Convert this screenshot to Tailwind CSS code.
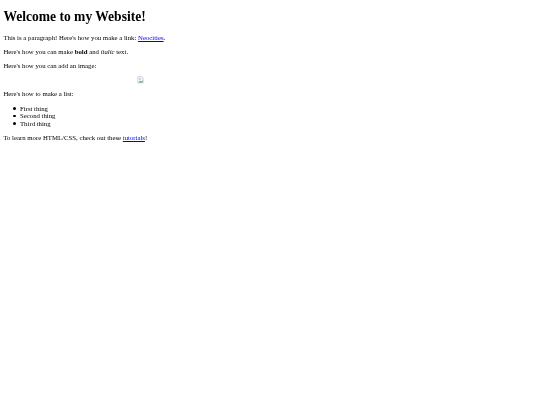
<!DOCTYPE html>
<html lang="en">
  <head>
    <meta charset="UTF-8" />
    <title>Welcome to my Website!</title>
    <script src="https://cdn.jsdelivr.net/npm/@tailwindcss/browser@4"></script>
  </head>
  <body class="bg-white text-black font-['Liberation_Serif',serif] text-[6.78px] leading-[7.6px]">
    <div class="px-[3.4px] pt-[8.7px] blur-[0.25px]">
      <h1 class="text-[13.56px] leading-[16px] font-bold mb-[9px]">Welcome to my Website!</h1>
      <p class="mb-[6.6px]">This is a paragraph! Here's how you make a link: <a href="#" class="text-[#0000ee] underline">Neocities</a>.</p>
      <p class="mb-[6.6px]">Here's how you can make <strong class="font-bold">bold</strong> and <em class="italic">italic</em> text.</p>
      <p class="mb-[6.6px]">Here's how you can add an image:</p>
      <div class="flex pl-[133.5px] mb-[6.6px]">
        <!-- broken image placeholder -->
        <svg class="w-[7px] h-[7.6px]" viewBox="0 0 16 16">
          <path d="M2 1h9l3 3v11H2z" fill="#fff" stroke="#b4b8c0" stroke-width="1.5" />
          <rect x="4" y="4" width="6" height="5" fill="#c4d8f4" />
          <path d="M3 14l4-4 3 2 3-3v5z" fill="#5fae62" />
        </svg>
      </div>
      <p class="mb-[6.6px]">Here's how to make a list:</p>
      <ul class="pl-[10px] mb-[6.6px]">
        <li class="flex items-center gap-[4.1px]"><span class="w-[2.5px] h-[2.5px] rounded-full bg-black"></span>First thing</li>
        <li class="flex items-center gap-[4.1px]"><span class="w-[2.5px] h-[2.5px] rounded-full bg-black"></span>Second thing</li>
        <li class="flex items-center gap-[4.1px]"><span class="w-[2.5px] h-[2.5px] rounded-full bg-black"></span>Third thing</li>
      </ul>
      <p>To learn more HTML/CSS, check out these <a href="#" class="text-[#0000ee] underline">tutorials</a>!</p>
    </div>
  </body>
</html>
